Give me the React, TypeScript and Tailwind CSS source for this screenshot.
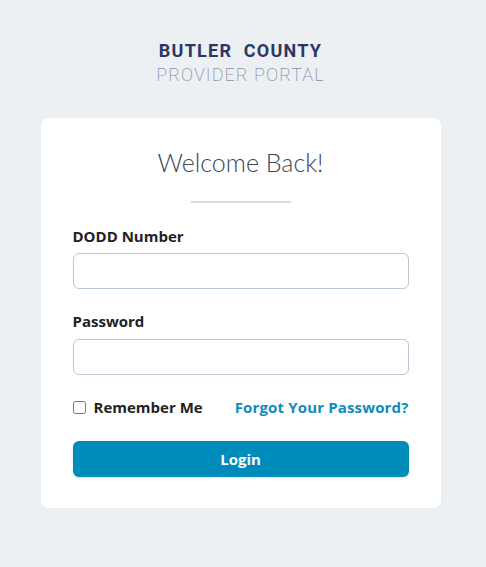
export default function App() {
  return (
    <div className="min-h-[567px] bg-[#ecf0f3] pt-[39px] font-['Lato','Noto_Sans',sans-serif]">
      <div className="w-[481px]">
        <header className="flex flex-col items-center font-['Roboto',sans-serif]">
          <h1 className="text-[18px] leading-[24px] font-bold tracking-[0.07em] text-[#2c3766]">BUTLER&nbsp; COUNTY</h1>
          <p className="text-[18px] leading-[24px] font-extralight tracking-[0.06em] text-[#8b90ad]">PROVIDER PORTAL</p>
        </header>

        <main className="mx-auto mt-[31px] w-[400px] rounded-lg bg-white px-8 pb-[31px] pt-[27px]">
          <h2 className="text-center text-[25px] leading-[34px] font-light text-[#3b4656]">Welcome Back!</h2>
          <div className="mx-auto mt-[22px] h-[2px] w-[100px] bg-[#d3dde7]" />

          <form className="mt-[23px] flex flex-col font-['Open_Sans',sans-serif]">
            <label className="text-[15px] leading-[20px] font-bold text-[#222]" htmlFor="dodd">
              DODD Number
            </label>
            <input id="dodd" className="mt-[7px] h-[36px] rounded-md border border-[#bac7d4] px-3" />

            <label className="mt-[22px] text-[15px] leading-[20px] font-bold text-[#222]" htmlFor="password">
              Password
            </label>
            <input id="password" type="password" className="mt-[8px] h-[36px] rounded-md border border-[#bac7d4] px-3" />

            <div className="mt-[22px] flex h-[20px] items-center justify-between">
              <label className="flex items-center gap-2 text-[15px] font-bold text-[#222]">
                <input type="checkbox" className="h-[13px] w-[13px]" />
                Remember Me
              </label>
              <a href="#" className="text-[15px] font-bold tracking-[0.01em] text-[#118bbb]">
                Forgot Your Password?
              </a>
            </div>

            <button className="mt-[24px] h-[36px] rounded-md bg-[#008cba] text-[15px] font-bold text-white shadow-sm">
              Login
            </button>
          </form>
        </main>
      </div>
    </div>
  );
}
